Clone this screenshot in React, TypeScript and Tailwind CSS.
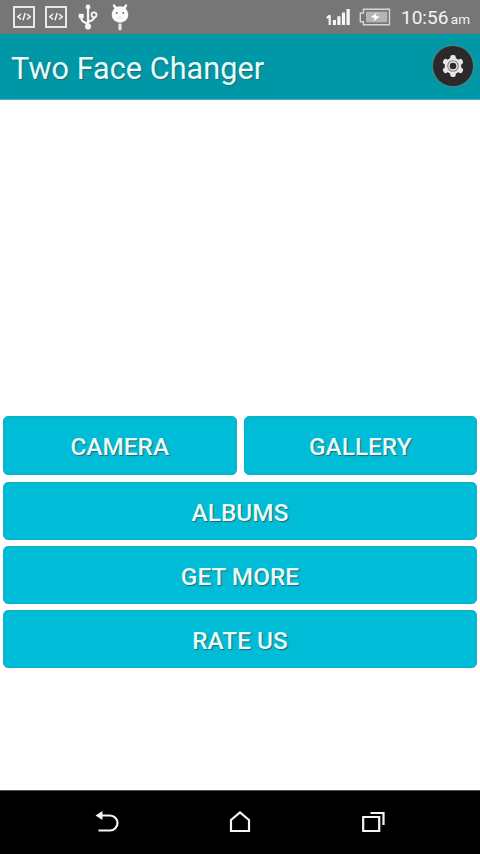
import React from 'react';

function CodeIcon() {
  return (
    <svg width="22" height="22" viewBox="0 0 22 22" fill="none" stroke="#f4f4f4">
      <rect x="1" y="1" width="20" height="20" strokeWidth="1.800" />
      <path d="M8 8 4.800 10.700 8 13.400M14 8l3.200 2.700L14 13.400M12.200 7l-2.300 7.400" strokeWidth="1.500" />
    </svg>
  );
}

function UsbIcon() {
  return (
    <svg width="20" height="26" viewBox="0 0 20 26" fill="none" stroke="#f6f6f6" strokeWidth="2.200">
      <path d="M10 3v19M10 20l-4.500-2.200Q3.300 16.500 3.300 13.500V12M10 18l4-1.800q2.500-1.200 2.500-3" />
      <circle cx="10" cy="3" r="2.400" fill="#f6f6f6" stroke="none" />
      <circle cx="10" cy="22.500" r="3" fill="#f6f6f6" stroke="none" />
      <path d="M.7 9.800h5v4.400h-5z" fill="#f6f6f6" stroke="none" />
      <circle cx="16" cy="10.800" r="2.500" strokeWidth="1.800" />
    </svg>
  );
}

function BugdroidIcon() {
  return (
    <svg width="20" height="28" viewBox="0 0 20 28">
      <path d="M4 2.500 6 5.500M16 2.500 14 5.500" stroke="#fafafa" strokeWidth="2.400" strokeLinecap="round" />
      <circle cx="10" cy="11.500" r="8.300" fill="#fafafa" />
      <rect x="8.400" y="20.500" width="3.200" height="6.800" rx="1" fill="#e4e4e4" />
      <circle cx="6.800" cy="10" r="1" fill="#777" />
      <circle cx="13.200" cy="10" r="1" fill="#777" />
      <path d="M8.200 14.200h3.600" stroke="#dcdcdc" fill="none" />
    </svg>
  );
}

function SignalIcon() {
  return (
    <svg width="25" height="18" viewBox="0 0 25 18" fill="#f5f5f5">
      <path d="M2.600 7h2.200v10H2.600v-7L.6 11V8.700z" />
      <path d="M6.800 12h3.200V17H6.800zM11.300 8.200h3.200V17h-3.200zM15.900 4.500h3.200V17h-3.200zM20.500 1h3.300v16h-3.300z" />
    </svg>
  );
}

function BatteryIcon() {
  return (
    <svg width="32" height="18" viewBox="0 0 32 18">
      <path d="M4.500 1.200h26v15.600h-26v-3H1.300V5h3.200z" fill="none" stroke="#d6d6d6" strokeWidth="1.400" />
      <path d="M7 3.700h21.200v10.600H7z" fill="#b5b5b5" />
      <path d="m17.800 4.500-5.800 4.700 4 .6-2 3.900 6.700-5.100-4.100-.6z" fill="#fff" />
    </svg>
  );
}

function GearIcon() {
  return (
    <svg width="22" height="24" viewBox="-11 -12 22 24" fill="#e6e6e6">
      <circle r="8.300" />
      <g>
        <rect x="-2.800" y="-11" width="5.600" height="22" rx="2.200" />
        <rect x="-2.800" y="-11" width="5.600" height="22" rx="2.200" transform="rotate(60)" />
        <rect x="-2.800" y="-11" width="5.600" height="22" rx="2.200" transform="rotate(120)" />
      </g>
      <circle r="5.300" fill="none" stroke="#858585" strokeWidth="1.100" />
      <circle r="3.300" fill="#2d292a" />
    </svg>
  );
}

function MenuButton({ label, tall = false }: { label: string; tall?: boolean }) {
  return (
    <button
      className={`${tall ? 'h-[59px] pt-[4px]' : 'h-[58px] pt-[5px]'} flex min-w-0 flex-1 items-center justify-center rounded-[5px] border border-[#12afc2] bg-[#00bcd7] text-[24.400px] leading-none font-medium text-[#e2ffff] [text-shadow:1px_1px_1px_#365f68]`}
    >
      {label}
    </button>
  );
}

export default function App() {
  return (
    <div className="flex h-[854px] w-[480px] flex-col overflow-hidden bg-white font-[Roboto,sans-serif]">
      <div className="flex h-[34px] shrink-0 items-center bg-[#767676] text-[#f3f3f3]">
        <div className="flex items-center pl-[13px]">
          <CodeIcon />
          <span className="w-[10px]" />
          <CodeIcon />
          <span className="w-[11px]" />
          <UsbIcon />
          <span className="w-[12px]" />
          <BugdroidIcon />
        </div>
        <div className="ml-auto flex items-center pr-[10px]">
          <SignalIcon />
          <span className="w-2" />
          <BatteryIcon />
          <div className="ml-[10px] flex w-[69px] items-baseline justify-between pt-px leading-none whitespace-nowrap">
            <span className="text-[19px]">10:56</span>
            <span className="text-[13.500px]">am</span>
          </div>
        </div>
      </div>

      <header className="flex h-[66px] shrink-0 items-center justify-between border-b border-[#4db3bd] bg-[#0097a7] pr-[7px] pl-[11px]">
        <h1 className="pt-[5px] text-[30.700px] leading-none font-normal whitespace-nowrap text-[#e2ffff] [text-shadow:1px_1px_1px_#31656c]">
          Two Face Changer
        </h1>
        <button aria-label="Settings" className="mb-[2px] flex size-[40px] items-center justify-center rounded-full bg-[#2d292a] shadow-[0_0_0_2px_#2b8c95]">
          <GearIcon />
        </button>
      </header>

      <main className="flex-1 px-[3px] pt-[316px]">
        <div className="flex gap-[7px]">
          <MenuButton label="CAMERA" tall />
          <MenuButton label="GALLERY" tall />
        </div>
        <div className="mt-[7px] flex flex-col gap-[6px]">
          <div className="flex"><MenuButton label="ALBUMS" /></div>
          <div className="flex"><MenuButton label="GET MORE" /></div>
          <div className="flex"><MenuButton label="RATE US" /></div>
        </div>
      </main>

      <nav className="flex h-[64px] shrink-0 items-center border-t border-[#555] bg-black px-[40px] pb-[2px]">
        <button aria-label="Back" className="flex flex-1 justify-center">
          <svg width="24" height="22" viewBox="0 0 24 22" fill="none" stroke="#f5f5f5" strokeWidth="2.200">
            <path d="M6 4.500h9a7.500 7.500 0 0 1 0 15H3.500" />
            <path d="M.5 4.500 7.500 0v9z" fill="#f5f5f5" stroke="none" />
          </svg>
        </button>
        <button aria-label="Home" className="flex flex-1 justify-center">
          <svg width="22" height="22" viewBox="0 0 22 22" fill="none" stroke="#f5f5f5" strokeWidth="2.200">
            <path d="M2 20V9l9-7.500L20 9v11z" />
          </svg>
        </button>
        <button aria-label="Recent apps" className="flex flex-1 justify-center">
          <svg width="24" height="22" viewBox="0 0 24 22" fill="none" stroke="#f5f5f5" strokeWidth="2.200">
            <path d="M2.200 6h16v14h-16zM9.500 2h13v12" />
          </svg>
        </button>
      </nav>
    </div>
  );
}
